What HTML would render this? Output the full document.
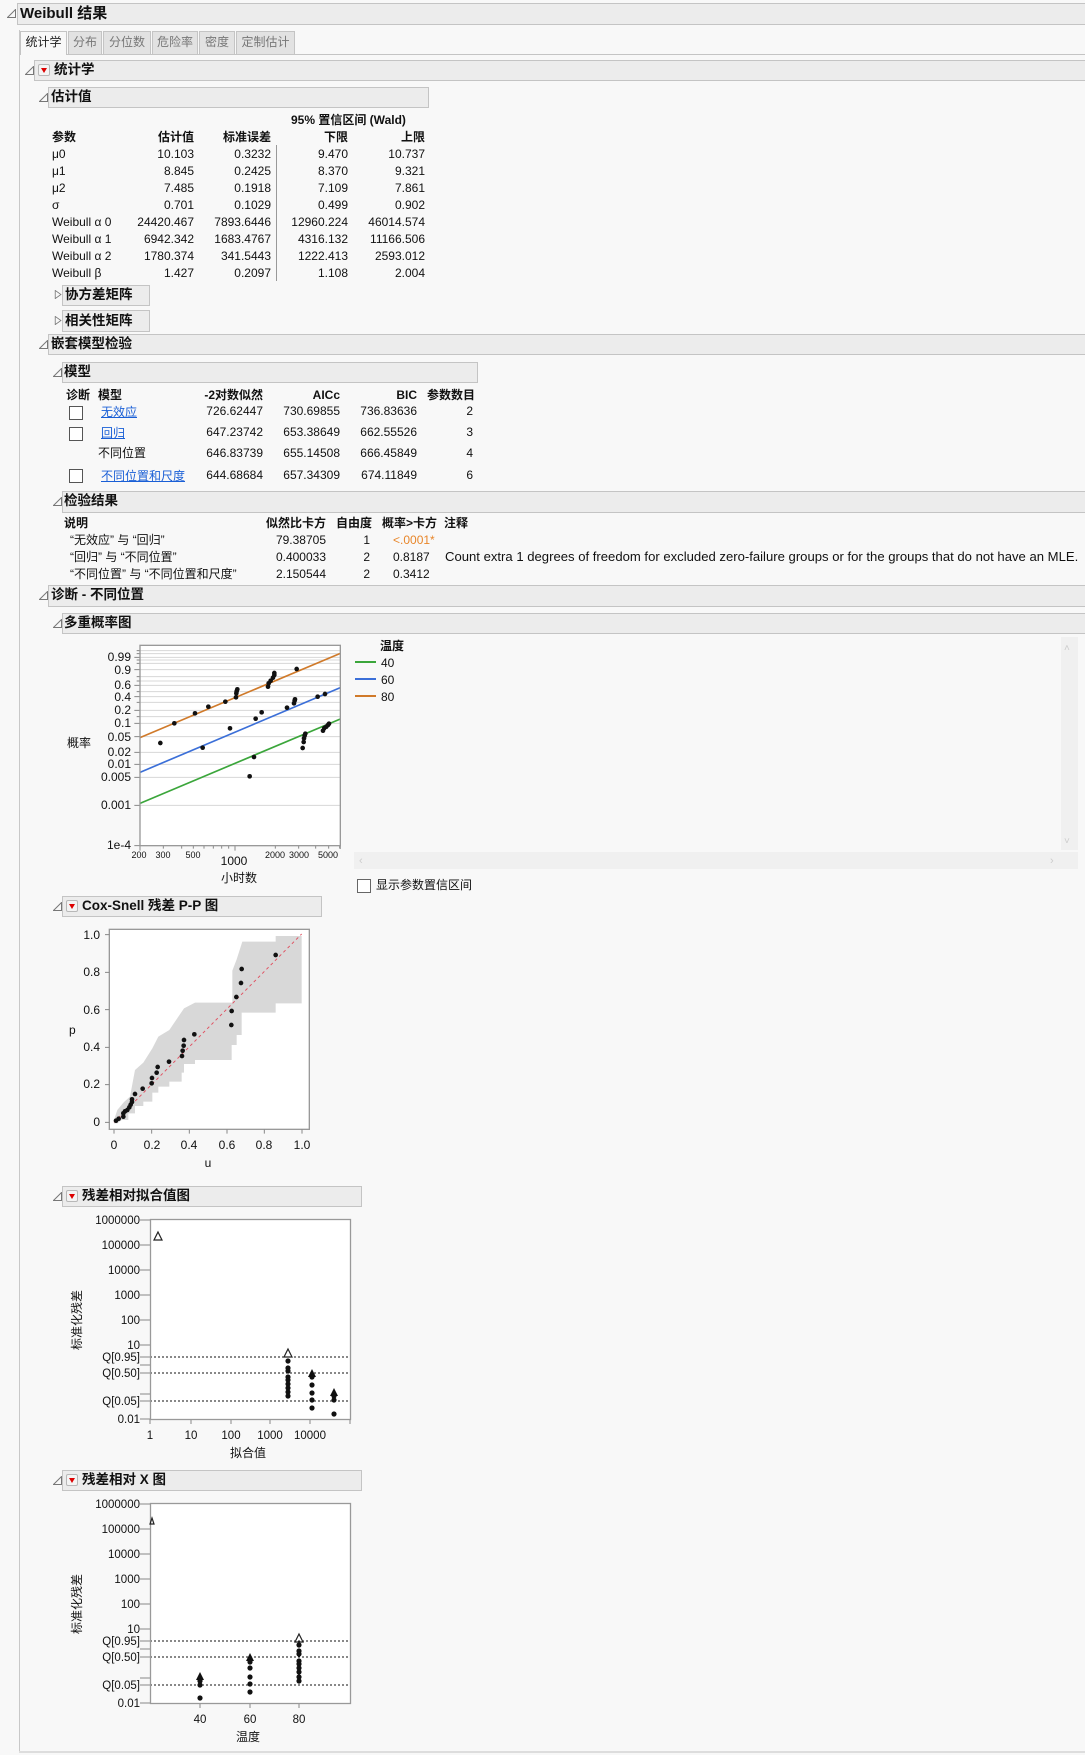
<!DOCTYPE html>
<html><head><meta charset="utf-8">
<style>
*{margin:0;padding:0;box-sizing:border-box}
body{width:1085px;height:1755px;background:#f8f8f8;position:relative;overflow:hidden;font-family:"Liberation Sans","Noto Sans CJK SC",sans-serif;font-size:12px;color:#111}
.a{position:absolute;white-space:nowrap;line-height:16px}
.r{position:absolute;white-space:nowrap;line-height:16px;text-align:right;width:120px}
.hb{position:absolute;background:#ececec;border:1px solid #c4c4c4}
.ht{position:absolute;white-space:nowrap;font-weight:bold;font-size:13.5px;line-height:18px}
.tri{position:absolute;width:9px;height:9px}
.dd{position:absolute;width:12px;height:12px;border:1px solid #b8b8b8;border-radius:2px;background:#f4f4f4}
.dd:after{content:"";position:absolute;left:2px;top:3px;border-left:3.5px solid transparent;border-right:3.5px solid transparent;border-top:5px solid #d00}
.b{font-weight:bold}
.cb{position:absolute;width:14px;height:14px;border:1px solid #555;background:#fff}
.lk{color:#1a5fd6;text-decoration:underline}
.tab{position:absolute;top:31px;height:23px;border:1px solid #c4c4c4;border-bottom:none;background:#e2e2e2;color:#777;line-height:21px;text-align:center;font-size:12px}
</style></head><body>
<div style="position:absolute;left:19px;top:30px;width:1px;height:1722px;background:#c8c8c8"></div>
<div style="position:absolute;left:19px;top:1751px;width:1066px;height:2px;background:#ddd"></div>
<div class="hb" style="left:17px;top:3px;width:1070px;height:22px"></div>
<svg class="tri" style="left:7px;top:9px" viewBox="0 0 9 9"><path d="M8.5 0.5V8.5H0.5Z" fill="none" stroke="#777"/></svg>
<div class="ht" style="left:20px;top:4px;font-size:15px;line-height:20px">Weibull 结果</div>
<div style="position:absolute;left:20px;top:54px;width:1065px;height:1px;background:#c4c4c4"></div>
<div class="tab" style="left:20px;width:47px;background:#f8f8f8;color:#222;height:24px">统计学</div>
<div class="tab" style="left:68px;width:34px">分布</div>
<div class="tab" style="left:103px;width:48px">分位数</div>
<div class="tab" style="left:152px;width:46px">危险率</div>
<div class="tab" style="left:199px;width:36px">密度</div>
<div class="tab" style="left:236px;width:59px">定制估计</div>
<div class="hb" style="left:34px;top:60px;width:1053px;height:21px"></div>
<svg class="tri" style="left:25px;top:66px" viewBox="0 0 9 9"><path d="M8.5 0.5V8.5H0.5Z" fill="none" stroke="#777"/></svg>
<div class="dd" style="left:38px;top:64px"></div>
<div class="ht" style="left:54px;top:61px">统计学</div>
<div class="hb" style="left:48px;top:87px;width:381px;height:21px"></div>
<svg class="tri" style="left:39px;top:93px" viewBox="0 0 9 9"><path d="M8.5 0.5V8.5H0.5Z" fill="none" stroke="#777"/></svg>
<div class="ht" style="left:51px;top:88px">估计值</div>
<div class="a b" style="left:291px;top:112px">95% 置信区间 (Wald)</div>
<div class="a b" style="left:52px;top:129px">参数</div>
<div class="r b" style="left:74px;top:129px">估计值</div>
<div class="r b" style="left:151px;top:129px">标准误差</div>
<div class="r b" style="left:228px;top:129px">下限</div>
<div class="r b" style="left:305px;top:129px">上限</div>
<div style="position:absolute;left:276px;top:145px;width:1px;height:136px;background:#999"></div>
<div class="a" style="left:52px;top:146px">μ0</div><div class="r" style="left:74px;top:146px">10.103</div><div class="r" style="left:151px;top:146px">0.3232</div><div class="r" style="left:228px;top:146px">9.470</div><div class="r" style="left:305px;top:146px">10.737</div>
<div class="a" style="left:52px;top:163px">μ1</div><div class="r" style="left:74px;top:163px">8.845</div><div class="r" style="left:151px;top:163px">0.2425</div><div class="r" style="left:228px;top:163px">8.370</div><div class="r" style="left:305px;top:163px">9.321</div>
<div class="a" style="left:52px;top:180px">μ2</div><div class="r" style="left:74px;top:180px">7.485</div><div class="r" style="left:151px;top:180px">0.1918</div><div class="r" style="left:228px;top:180px">7.109</div><div class="r" style="left:305px;top:180px">7.861</div>
<div class="a" style="left:52px;top:197px">σ</div><div class="r" style="left:74px;top:197px">0.701</div><div class="r" style="left:151px;top:197px">0.1029</div><div class="r" style="left:228px;top:197px">0.499</div><div class="r" style="left:305px;top:197px">0.902</div>
<div class="a" style="left:52px;top:214px">Weibull α 0</div><div class="r" style="left:74px;top:214px">24420.467</div><div class="r" style="left:151px;top:214px">7893.6446</div><div class="r" style="left:228px;top:214px">12960.224</div><div class="r" style="left:305px;top:214px">46014.574</div>
<div class="a" style="left:52px;top:231px">Weibull α 1</div><div class="r" style="left:74px;top:231px">6942.342</div><div class="r" style="left:151px;top:231px">1683.4767</div><div class="r" style="left:228px;top:231px">4316.132</div><div class="r" style="left:305px;top:231px">11166.506</div>
<div class="a" style="left:52px;top:248px">Weibull α 2</div><div class="r" style="left:74px;top:248px">1780.374</div><div class="r" style="left:151px;top:248px">341.5443</div><div class="r" style="left:228px;top:248px">1222.413</div><div class="r" style="left:305px;top:248px">2593.012</div>
<div class="a" style="left:52px;top:265px">Weibull β</div><div class="r" style="left:74px;top:265px">1.427</div><div class="r" style="left:151px;top:265px">0.2097</div><div class="r" style="left:228px;top:265px">1.108</div><div class="r" style="left:305px;top:265px">2.004</div>
<div class="hb" style="left:62px;top:285px;width:88px;height:21px"></div>
<svg class="tri" style="left:54px;top:290px" viewBox="0 0 9 11"><path d="M0.5 0.5L7.5 5.5L0.5 10.5Z" fill="none" stroke="#777"/></svg>
<div class="ht" style="left:65px;top:286px">协方差矩阵</div>
<div class="hb" style="left:62px;top:310px;width:88px;height:22px"></div>
<svg class="tri" style="left:54px;top:316px" viewBox="0 0 9 11"><path d="M0.5 0.5L7.5 5.5L0.5 10.5Z" fill="none" stroke="#777"/></svg>
<div class="ht" style="left:65px;top:312px">相关性矩阵</div>
<div class="hb" style="left:48px;top:334px;width:1039px;height:21px"></div>
<svg class="tri" style="left:39px;top:340px" viewBox="0 0 9 9"><path d="M8.5 0.5V8.5H0.5Z" fill="none" stroke="#777"/></svg>
<div class="ht" style="left:51px;top:335px">嵌套模型检验</div>
<div class="hb" style="left:62px;top:362px;width:416px;height:21px"></div>
<svg class="tri" style="left:53px;top:368px" viewBox="0 0 9 9"><path d="M8.5 0.5V8.5H0.5Z" fill="none" stroke="#777"/></svg>
<div class="ht" style="left:64px;top:363px">模型</div>
<div class="a b" style="left:66px;top:387px">诊断</div>
<div class="a b" style="left:98px;top:387px">模型</div>
<div class="r b" style="left:143px;top:387px">-2对数似然</div>
<div class="r b" style="left:220px;top:387px">AICc</div>
<div class="r b" style="left:297px;top:387px">BIC</div>
<div class="r b" style="left:355px;top:387px">参数数目</div>
<div class="cb" style="left:69px;top:406px"></div><div class="a lk" style="left:101px;top:404px">无效应</div>
<div class="r" style="left:143px;top:403px">726.62447</div><div class="r" style="left:220px;top:403px">730.69855</div><div class="r" style="left:297px;top:403px">736.83636</div><div class="r" style="left:353px;top:403px">2</div>
<div class="cb" style="left:69px;top:427px"></div><div class="a lk" style="left:101px;top:425px">回归</div>
<div class="r" style="left:143px;top:424px">647.23742</div><div class="r" style="left:220px;top:424px">653.38649</div><div class="r" style="left:297px;top:424px">662.55526</div><div class="r" style="left:353px;top:424px">3</div>
<div class="a" style="left:98px;top:445px">不同位置</div>
<div class="r" style="left:143px;top:445px">646.83739</div><div class="r" style="left:220px;top:445px">655.14508</div><div class="r" style="left:297px;top:445px">666.45849</div><div class="r" style="left:353px;top:445px">4</div>
<div class="cb" style="left:69px;top:469px"></div><div class="a lk" style="left:101px;top:468px">不同位置和尺度</div>
<div class="r" style="left:143px;top:467px">644.68684</div><div class="r" style="left:220px;top:467px">657.34309</div><div class="r" style="left:297px;top:467px">674.11849</div><div class="r" style="left:353px;top:467px">6</div>
<div class="hb" style="left:62px;top:491px;width:1025px;height:22px"></div>
<svg class="tri" style="left:53px;top:497px" viewBox="0 0 9 9"><path d="M8.5 0.5V8.5H0.5Z" fill="none" stroke="#777"/></svg>
<div class="ht" style="left:64px;top:492px">检验结果</div>
<div class="a b" style="left:64px;top:515px">说明</div>
<div class="r b" style="left:206px;top:515px">似然比卡方</div>
<div class="r b" style="left:252px;top:515px">自由度</div>
<div class="r b" style="left:317px;top:515px">概率&gt;卡方</div>
<div class="a b" style="left:444px;top:515px">注释</div>
<div class="a" style="left:70px;top:532px">“无效应” 与 “回归”</div>
<div class="r" style="left:206px;top:532px">79.38705</div><div class="r" style="left:250px;top:532px">1</div><div class="a" style="left:393px;top:532px;color:#e8862a">&lt;.0001*</div>
<div class="a" style="left:70px;top:549px">“回归” 与 “不同位置”</div>
<div class="r" style="left:206px;top:549px">0.400033</div><div class="r" style="left:250px;top:549px">2</div><div class="a" style="left:393px;top:549px">0.8187</div>
<div class="a" style="left:445px;top:549px;font-size:13.1px">Count extra 1 degrees of freedom for excluded zero-failure groups or for the groups that do not have an MLE.</div>
<div class="a" style="left:70px;top:566px">“不同位置” 与 “不同位置和尺度”</div>
<div class="r" style="left:206px;top:566px">2.150544</div><div class="r" style="left:250px;top:566px">2</div><div class="a" style="left:393px;top:566px">0.3412</div>
<div class="hb" style="left:48px;top:585px;width:1039px;height:22px"></div>
<svg class="tri" style="left:39px;top:591px" viewBox="0 0 9 9"><path d="M8.5 0.5V8.5H0.5Z" fill="none" stroke="#777"/></svg>
<div class="ht" style="left:51px;top:586px">诊断 - 不同位置</div>
<div class="hb" style="left:62px;top:613px;width:1025px;height:21px"></div>
<svg class="tri" style="left:53px;top:619px" viewBox="0 0 9 9"><path d="M8.5 0.5V8.5H0.5Z" fill="none" stroke="#777"/></svg>
<div class="ht" style="left:64px;top:614px">多重概率图</div>
<div style="position:absolute;left:352px;top:637px;width:707px;height:213px;background:#f8f8f8"></div>
<div style="position:absolute;left:340px;top:645px;width:1px;height:204px;background:#aaa"></div>
<div style="position:absolute;left:1061px;top:637px;width:17px;height:213px;background:#f0f0f0"></div>
<div style="position:absolute;left:354px;top:852px;width:724px;height:17px;background:#f0f0f0"></div>
<div class="a" style="left:1064px;top:641px;color:#ccc;font-size:10px">˄</div>
<div class="a" style="left:1064px;top:834px;color:#ccc;font-size:10px">˅</div>
<div class="a" style="left:359px;top:853px;color:#ccc;font-size:11px">‹</div>
<div class="a" style="left:1050px;top:853px;color:#ccc;font-size:11px">›</div>
<div class="a b" style="left:380px;top:638px">温度</div>
<div style="position:absolute;left:355px;top:661px;width:21px;height:2px;background:#3ba63b"></div><div class="a" style="left:381px;top:655px">40</div>
<div style="position:absolute;left:355px;top:678px;width:21px;height:2px;background:#3b6fd8"></div><div class="a" style="left:381px;top:672px">60</div>
<div style="position:absolute;left:355px;top:695px;width:21px;height:2px;background:#d07a2a"></div><div class="a" style="left:381px;top:689px">80</div>
<div class="cb" style="left:357px;top:879px;border-color:#666"></div>
<div class="a" style="left:376px;top:877px">显示参数置信区间</div>
<div class="hb" style="left:62px;top:896px;width:260px;height:21px"></div>
<svg class="tri" style="left:53px;top:902px" viewBox="0 0 9 9"><path d="M8.5 0.5V8.5H0.5Z" fill="none" stroke="#777"/></svg>
<div class="dd" style="left:66px;top:900px"></div>
<div class="ht" style="left:82px;top:897px">Cox-Snell 残差 P-P 图</div>
<div class="hb" style="left:62px;top:1186px;width:300px;height:21px"></div>
<svg class="tri" style="left:53px;top:1192px" viewBox="0 0 9 9"><path d="M8.5 0.5V8.5H0.5Z" fill="none" stroke="#777"/></svg>
<div class="dd" style="left:66px;top:1190px"></div>
<div class="ht" style="left:82px;top:1187px">残差相对拟合值图</div>
<div class="hb" style="left:62px;top:1470px;width:300px;height:21px"></div>
<svg class="tri" style="left:53px;top:1476px" viewBox="0 0 9 9"><path d="M8.5 0.5V8.5H0.5Z" fill="none" stroke="#777"/></svg>
<div class="dd" style="left:66px;top:1474px"></div>
<div class="ht" style="left:82px;top:1471px">残差相对 X 图</div>

<svg style="position:absolute;left:0;top:0" width="1085" height="1755" font-family="Liberation Sans, Noto Sans CJK SC, sans-serif" font-size="12" fill="#111">
<rect x="140" y="645" width="200" height="201" fill="#fff"/>
<g transform="translate(40,610) scale(0.33333)" stroke-width="3">
 <g stroke="#d8d8d8">
  <path d="M300 122H901M300 131H901M300 142H901M300 150H901M300 160H901M300 179H901M300 200H901M300 213H901M300 226H901M300 245H901M300 260H901M300 277H901M300 301H901M300 320H901M300 340H901M300 380H901M300 427H901M300 463H901M300 502H901M300 586H901"/>
 </g>
 <g stroke="#888">
  <path d="M283 142H300M283 179H300M283 226H300M283 260H300M283 301H300M283 340H300M283 380H300M283 427H300M283 463H300M283 502H300M283 586H300M283 707H300M290 122H300M290 131H300M290 150H300M290 160H300M290 200H300M290 213H300M290 245H300M290 277H300M290 320H300"/>
  <path d="M300 707V722M370 707V716M425 707V716M460 707V716M492 707V716M520 707V716M545 707V716M566 707V716M585 707V722M706 707V716M776 707V716M827 707V716M866 707V716M899 707V716"/>
 </g>
 <path d="M300 383L901 130" stroke="#d07a2a" stroke-width="5"/>
 <path d="M300 487L901 233" stroke="#3b6fd8" stroke-width="5"/>
 <path d="M300 580L901 327" stroke="#3ba63b" stroke-width="5"/>
 <rect x="300" y="106" width="601" height="601" fill="none" stroke="#999" stroke-width="4"/>
 <g fill="#111" stroke="none">
  <circle cx="361" cy="399" r="7"/><circle cx="403" cy="340" r="7"/><circle cx="465" cy="310" r="7"/><circle cx="505" cy="290" r="7"/><circle cx="556" cy="275" r="7"/><circle cx="570" cy="355" r="7"/><circle cx="588" cy="262" r="7"/><circle cx="589" cy="250" r="7"/><circle cx="590" cy="244" r="7"/><circle cx="592" cy="238" r="7"/><circle cx="488" cy="413" r="7"/><circle cx="629" cy="499" r="7"/><circle cx="642" cy="441" r="7"/><circle cx="647" cy="326" r="7"/><circle cx="665" cy="307" r="7"/><circle cx="684" cy="230" r="7"/><circle cx="686" cy="220" r="7"/><circle cx="692" cy="212" r="7"/><circle cx="699" cy="203" r="7"/><circle cx="703" cy="195" r="7"/><circle cx="703" cy="189" r="7"/><circle cx="741" cy="293" r="7"/><circle cx="762" cy="280" r="7"/><circle cx="764" cy="272" r="7"/><circle cx="765" cy="268" r="7"/><circle cx="770" cy="177" r="7"/><circle cx="833" cy="260" r="7"/><circle cx="855" cy="252" r="7"/><circle cx="788" cy="414" r="7"/><circle cx="791" cy="396" r="7"/><circle cx="792" cy="385" r="7"/><circle cx="794" cy="377" r="7"/><circle cx="796" cy="371" r="7"/><circle cx="849" cy="362" r="7"/><circle cx="853" cy="354" r="7"/><circle cx="859" cy="350" r="7"/><circle cx="864" cy="345" r="7"/><circle cx="867" cy="341" r="7"/>
 </g>
</g>
<g text-anchor="end" font-size="12">
 <text x="131" y="661">0.99</text><text x="131" y="674">0.9</text><text x="131" y="689">0.6</text><text x="131" y="701">0.4</text><text x="131" y="714">0.2</text><text x="131" y="727">0.1</text><text x="131" y="741">0.05</text><text x="131" y="756">0.02</text><text x="131" y="768">0.01</text><text x="131" y="781">0.005</text><text x="131" y="809">0.001</text><text x="131" y="849">1e-4</text>
</g>
<g text-anchor="middle" font-size="9">
 <text x="139" y="858">200</text><text x="163" y="858">300</text><text x="193" y="858">500</text><text x="275" y="858">2000</text><text x="299" y="858">3000</text><text x="328" y="858">5000</text>
</g>
<text x="234" y="865" text-anchor="middle">1000</text>
<text x="239" y="882" text-anchor="middle">小时数</text>
<text x="67" y="747">概率</text>
<rect x="109" y="929" width="200" height="200" fill="#fff"/>
<g transform="translate(40,890) scale(0.33333)">
 <path fill="#d8d8d8" d="M222 690L232 660L252 636L270 620L285 540L310 518L337 475L355 440L388 420L432 355L465 338L577 338L577 242L590 208L607 155L707 155L707 138L785 138L785 340L707 340L707 368L605 368L605 435L590 435L590 465L575 465L575 510L465 510L465 522L432 522L432 548L425 548L425 575L388 575L388 590L355 590L355 608L337 608L337 635L310 635L310 648L285 648L285 670L265 670L265 690L245 690L232 700L222 700Z"/>
 <path d="M222 697L785 132" stroke="#e05060" stroke-width="3" stroke-dasharray="9 9"/>
 <rect x="208" y="118" width="600" height="600" fill="none" stroke="#999" stroke-width="4"/>
 <g stroke="#888" stroke-width="3"><path d="M195 134H208M195 247H208M195 359H208M195 472H208M195 584H208M195 697H208M222 718V731M335 718V731M448 718V731M561 718V731M673 718V731M786 718V731"/></g>
 <g fill="#111">
  <circle cx="707" cy="195" r="7"/><circle cx="605" cy="237" r="7"/><circle cx="603" cy="279" r="7"/><circle cx="589" cy="321" r="7"/><circle cx="575" cy="363" r="7"/><circle cx="574" cy="405" r="7"/><circle cx="463" cy="433" r="7"/><circle cx="432" cy="450" r="7"/><circle cx="431" cy="467" r="7"/><circle cx="428" cy="482" r="7"/><circle cx="426" cy="498" r="7"/><circle cx="387" cy="515" r="7"/><circle cx="353" cy="531" r="7"/><circle cx="350" cy="548" r="7"/><circle cx="336" cy="564" r="7"/><circle cx="335" cy="580" r="7"/><circle cx="308" cy="596" r="7"/><circle cx="285" cy="612" r="7"/><circle cx="276" cy="628" r="7"/><circle cx="276" cy="636" r="7"/><circle cx="272" cy="644" r="7"/><circle cx="268" cy="652" r="7"/><circle cx="262" cy="660" r="7"/><circle cx="255" cy="664" r="7"/><circle cx="250" cy="670" r="7"/><circle cx="250" cy="680" r="7"/><circle cx="236" cy="686" r="7"/><circle cx="228" cy="692" r="7"/>
 </g>
</g>
<g text-anchor="end"><text x="100" y="939">1.0</text><text x="100" y="976">0.8</text><text x="100" y="1014">0.6</text><text x="100" y="1051">0.4</text><text x="100" y="1088">0.2</text><text x="100" y="1126">0</text></g>
<g text-anchor="middle"><text x="114" y="1149">0</text><text x="152" y="1149">0.2</text><text x="189" y="1149">0.4</text><text x="227" y="1149">0.6</text><text x="264" y="1149">0.8</text><text x="302" y="1149">1.0</text></g>
<text x="208" y="1167" text-anchor="middle">u</text>
<text x="69" y="1034">p</text>
<rect x="150" y="1219" width="200" height="200" fill="#fff"/>
<g stroke="#888"><path d="M140 1220H150M140 1245H150M140 1270H150M140 1295H150M140 1320H150M140 1345H150M140 1357H150M140 1373H150M140 1401H150M140 1419H150M140 1365H150M140 1394H150M150 1419V1424M191 1419V1424M231 1419V1424M270 1419V1424M310 1419V1424M350 1419V1424"/></g>
<path d="M150 1357H350M150 1373H350M150 1401H350" stroke="#111" stroke-dasharray="2 2"/>
<rect x="150.5" y="1219.5" width="200" height="200" fill="none" stroke="#999" stroke-width="1.3"/>
<g font-size="11.5" text-anchor="end"><text x="140" y="1224">1000000</text><text x="140" y="1249">100000</text><text x="140" y="1274">10000</text><text x="140" y="1299">1000</text><text x="140" y="1324">100</text><text x="140" y="1349">10</text><text x="140" y="1361">Q[0.95]</text><text x="140" y="1377">Q[0.50]</text><text x="140" y="1405">Q[0.05]</text><text x="140" y="1423">0.01</text></g>
<g font-size="11.5" text-anchor="middle"><text x="150" y="1439">1</text><text x="191" y="1439">10</text><text x="231" y="1439">100</text><text x="270" y="1439">1000</text><text x="310" y="1439">10000</text></g>
<text x="248" y="1457" text-anchor="middle">拟合值</text>
<text transform="translate(81,1320) rotate(-90)" text-anchor="middle">标准化残差</text>
<g fill="none" stroke="#222" stroke-width="1.2"><path d="M158 1232L162 1240H154Z"/><path d="M288 1349L292 1357H284Z"/></g>
<g fill="#111"><path d="M312 1369L316 1377H308Z"/><path d="M334 1388L338 1396H330Z"/>
<circle cx="288" cy="1361" r="2.6"/><circle cx="288" cy="1368" r="2.6"/><circle cx="288" cy="1371" r="2.6"/><circle cx="288" cy="1377" r="2.6"/><circle cx="288" cy="1380" r="2.6"/><circle cx="288" cy="1384" r="2.6"/><circle cx="288" cy="1388" r="2.6"/><circle cx="288" cy="1392" r="2.6"/><circle cx="288" cy="1396" r="2.6"/>
<circle cx="312" cy="1377" r="2.6"/><circle cx="312" cy="1385" r="2.6"/><circle cx="312" cy="1393" r="2.6"/><circle cx="312" cy="1400" r="2.6"/><circle cx="312" cy="1408" r="2.6"/>
<circle cx="334" cy="1396" r="2.6"/><circle cx="334" cy="1400" r="2.6"/><circle cx="334" cy="1414" r="2.6"/></g>
<rect x="150" y="1503" width="200" height="200" fill="#fff"/>
<g stroke="#888"><path d="M140 1504H150M140 1529H150M140 1554H150M140 1579H150M140 1604H150M140 1629H150M140 1641H150M140 1657H150M140 1685H150M140 1703H150M140 1649H150M140 1678H150M200 1703V1708M250 1703V1708M299 1703V1708"/></g>
<path d="M150 1641H350M150 1657H350M150 1685H350" stroke="#111" stroke-dasharray="2 2"/>
<rect x="150.5" y="1503.5" width="200" height="200" fill="none" stroke="#999" stroke-width="1.3"/>
<g font-size="11.5" text-anchor="end"><text x="140" y="1508">1000000</text><text x="140" y="1533">100000</text><text x="140" y="1558">10000</text><text x="140" y="1583">1000</text><text x="140" y="1608">100</text><text x="140" y="1633">10</text><text x="140" y="1645">Q[0.95]</text><text x="140" y="1661">Q[0.50]</text><text x="140" y="1689">Q[0.05]</text><text x="140" y="1707">0.01</text></g>
<g font-size="11.5" text-anchor="middle"><text x="200" y="1723">40</text><text x="250" y="1723">60</text><text x="299" y="1723">80</text></g>
<text x="248" y="1741" text-anchor="middle">温度</text>
<text transform="translate(81,1604) rotate(-90)" text-anchor="middle">标准化残差</text>
<g fill="none" stroke="#222" stroke-width="1.2"><path d="M152 1518L154 1524H150Z"/><path d="M299 1634L303 1642H295Z"/></g>
<g fill="#111"><path d="M200 1672L204 1680H196Z"/><path d="M250 1653L254 1661H246Z"/>
<circle cx="200" cy="1681" r="2.6"/><circle cx="200" cy="1685" r="2.6"/><circle cx="200" cy="1698" r="2.6"/>
<circle cx="250" cy="1662" r="2.6"/><circle cx="250" cy="1668" r="2.6"/><circle cx="250" cy="1677" r="2.6"/><circle cx="250" cy="1684" r="2.6"/><circle cx="250" cy="1692" r="2.6"/>
<circle cx="299" cy="1645" r="2.6"/><circle cx="299" cy="1651" r="2.6"/><circle cx="299" cy="1654" r="2.6"/><circle cx="299" cy="1661" r="2.6"/><circle cx="299" cy="1664" r="2.6"/><circle cx="299" cy="1668" r="2.6"/><circle cx="299" cy="1672" r="2.6"/><circle cx="299" cy="1677" r="2.6"/><circle cx="299" cy="1681" r="2.6"/></g>
</svg>
</body></html>
